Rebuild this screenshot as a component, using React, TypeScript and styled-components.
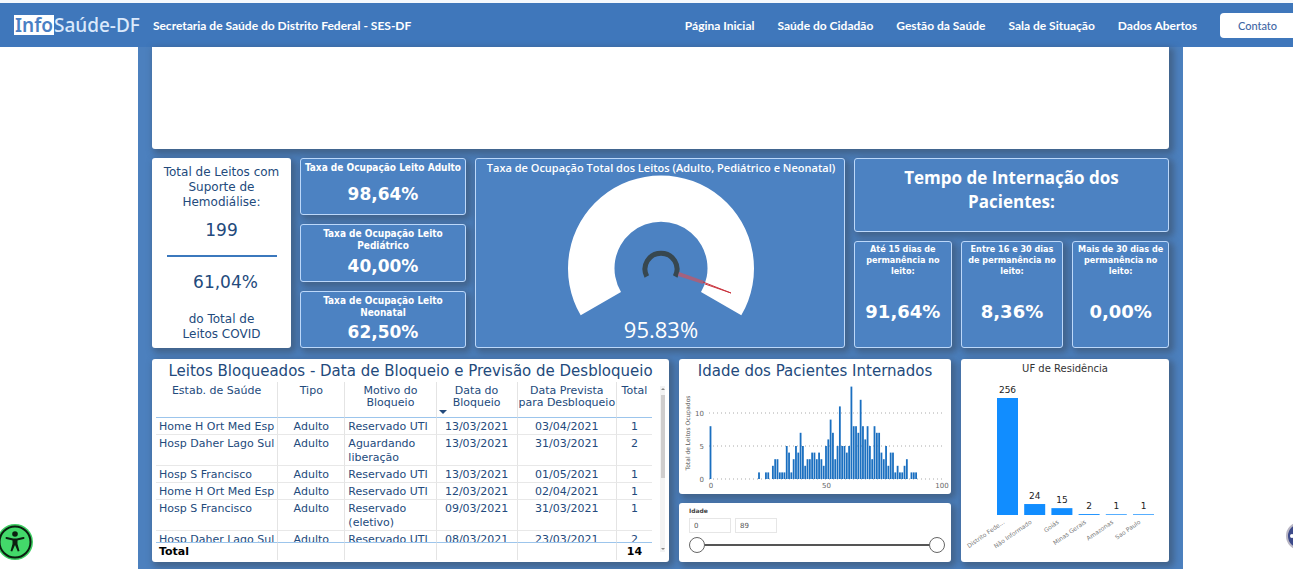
import React from "react";
import styled, { createGlobalStyle } from "styled-components";

const NAVY = "#234a7c";
const VERDANA = '"DejaVu Sans", Verdana, sans-serif';
const TAHOMA = '"DejaVu Sans Condensed", "DejaVu Sans", sans-serif';
const SEGOE = '"Open Sans", "Noto Sans", sans-serif';

const GlobalStyle = createGlobalStyle`
  * { box-sizing: border-box; }
  html { overflow: hidden; }
  body { margin: 0; background: #fff; font-family: ${VERDANA}; }
  h1, h2, h3, p { margin: 0; font-weight: inherit; font-size: inherit; }
`;

const Page = styled.div`
  display: flex;
  flex-direction: column;
  min-height: 100vh;
  overflow-x: clip;
`;

const Header = styled.header`
  display: flex;
  align-items: center;
  height: 47px;
  padding-left: 14px;
  border-top: 3px solid #f4f8fd;
  background: #3f77bb;
  color: #fff;
  font-family: Lato, sans-serif;
  font-size: 12px;
  font-weight: 700;
  white-space: nowrap;
`;

const Logo = styled.a`
  display: flex;
  align-items: center;
  height: 20px;
  color: #dbe9fb;
  font-family: "Noto Sans", sans-serif;
  font-size: 19px;
  font-weight: 500;
  line-height: 20px;
  text-decoration: none;
`;

const LogoMark = styled.span`
  padding: 0 1px;
  background: #fff;
  color: #4a7fc4;
  font-weight: 600;
`;

const Org = styled.h1`
  margin-left: 13px;
`;

const Nav = styled.nav`
  display: flex;
  align-items: center;
  gap: 23px;
  margin-left: auto;
  margin-right: -10px;
`;

const NavLink = styled.a`
  color: #fff;
  text-decoration: none;
`;

const Contact = styled.button`
  width: 83px;
  height: 25px;
  padding: 0 8px 0 0;
  border: 0;
  border-radius: 4px;
  background: #fff;
  color: #3f67a5;
  font: 500 11px Lato, sans-serif;
`;

const Board = styled.main`
  display: flex;
  flex-direction: column;
  flex: 1;
  margin: 0 110px 0 138px;
  padding: 0 14px 7px;
  background: #4c80be;
`;

const shadow = "3px 3px 6px 2px rgba(55, 70, 90, 0.5)";

const Card = styled.section`
  min-width: 0;
  border-radius: 3px;
  background: #fff;
  box-shadow: ${shadow};
  color: ${NAVY};
`;

const Tile = styled.section`
  display: flex;
  flex-direction: column;
  align-items: center;
  min-width: 0;
  border: 1px solid #bcd8fa;
  border-radius: 3px;
  background: #4c82c2;
  box-shadow: ${shadow};
  color: #fff;
  text-align: center;
`;

const BlankCard = styled(Card)`
  height: 102px;
  border-radius: 0 0 3px 3px;
`;

const SummaryRow = styled.div`
  display: grid;
  grid-template-columns: 139fr 166fr 370fr 315fr;
  gap: 9px;
  min-height: 190px;
  margin-top: 9px;
`;

const DetailRow = styled.div`
  display: grid;
  grid-template-columns: 517fr 272fr 208fr;
  gap: 10px;
  min-height: 203px;
  margin-top: 11px;
`;

const Dialysis = styled(Card)`
  display: flex;
  flex-direction: column;
  align-items: center;
  justify-content: space-between;
  padding: 7px 5px 6px;
  font-size: 12px;
  line-height: 15px;
  text-align: center;
`;

const DialysisValue = styled.p`
  font-size: 17px;
  line-height: 20px;
`;

const DialysisTotal = styled(DialysisValue)`
  padding: 0 0 10px 8px;
`;

const Divider = styled.hr`
  width: 110px;
  margin: 5px 0;
  border: 0;
  border-top: 2px solid #3b78bd;
`;

const Stack = styled.div`
  display: flex;
  flex-direction: column;
  gap: 9px;
  min-width: 0;
`;

const RateTile = styled(Tile)`
  flex: 1;
  padding: 3px 2px 1px;
`;

const TileLabel = styled.h2`
  font-family: ${TAHOMA};
  font-size: 10px;
  font-weight: 700;
  line-height: 12px;
`;

const TileValue = styled.p`
  margin: auto 0;
  font-size: 17px;
  font-weight: 700;
  line-height: 22px;
`;

const GaugeTile = styled(Tile)`
  padding: 2px 0 0 2px;
`;

const GaugeTitle = styled.h2`
  font-family: ${SEGOE};
  font-size: 11px;
  font-weight: 600;
  line-height: 14px;
  white-space: nowrap;
`;

const GaugeValue = styled.p`
  font-family: ${SEGOE};
  font-size: 22px;
  line-height: 24px;
`;

const StayTitle = styled(Tile)`
  padding: 7px 40px 17px;
  font-family: ${SEGOE};
  font-size: 17px;
  font-weight: 700;
  line-height: 24px;
`;

const StayGrid = styled.div`
  display: grid;
  grid-template-columns: 98fr 103fr 97fr;
  gap: 9px;
  flex: 1;
`;

const StayTile = styled(Tile)`
  padding: 2px 2px 24px;
  justify-content: space-between;
`;

const StayLabel = styled.h3`
  font-family: ${TAHOMA};
  font-size: 9px;
  font-weight: 700;
  line-height: 11px;
`;

const StayValue = styled.p`
  font-size: 18px;
  font-weight: 700;
  line-height: 22px;
`;

const TableCard = styled(Card)`
  padding: 3px 4px 2px;
`;

const CardTitle = styled.h2`
  font-size: 15px;
  line-height: 18px;
  text-align: center;
  white-space: nowrap;
`;

const TableArea = styled.div`
  display: flex;
  justify-content: space-between;
  margin-top: 2px;
`;

const TableClip = styled.div`
  flex: 1;
  height: 178px;
  overflow: hidden;
`;

const Table = styled.table`
  width: 100%;
  table-layout: fixed;
  border-collapse: separate;
  border-spacing: 0;
  font-size: 11px;
  line-height: 14px;
`;

const Th = styled.th`
  position: relative;
  height: 36px;
  padding: 3px 0 0;
  border-bottom: 1px solid #9cc5ec;
  border-right: 1px solid #e4e4e4;
  font-weight: 400;
  line-height: 12px;
  vertical-align: top;
  &:last-child { border-right: 0; }
`;

const SortMark = styled.span`
  position: absolute;
  left: 2px;
  bottom: 3px;
  border: 4px solid transparent;
  border-top-color: ${NAVY};
  border-bottom: 0;
`;

const Td = styled.td<{ $left?: boolean }>`
  padding: 2px 0 0 ${(p) => (p.$left ? 3 : 0)}px;
  border-bottom: 1px solid #e8e8e8;
  border-right: 1px solid #e4e4e4;
  text-align: ${(p) => (p.$left ? "left" : "center")};
  vertical-align: top;
  &:last-child { border-right: 0; }
`;

const FootTd = styled(Td)`
  position: sticky;
  bottom: 0;
  height: 18px;
  border-top: 1px solid #9cc5ec;
  border-bottom: 0;
  background: #fff;
  color: #000;
  font-weight: 700;
`;

const ScrollBar = styled.div`
  display: flex;
  flex-direction: column;
  align-items: center;
  justify-content: space-between;
  width: 5px;
  margin: 4px 0 8px 8px;
  background: #f3f3f3;
`;

const ScrollThumb = styled.span`
  width: 4px;
  height: 83px;
  margin: 5px 0 auto;
  background: #cfcdcd;
`;

const Arrow = styled.span<{ $down?: boolean }>`
  border: 2px solid transparent;
  border-${(p) => (p.$down ? "top" : "bottom")}-color: #888;
`;

const HistCard = styled(Card)`
  padding: 3px 0 0;
  flex: 1;
`;

const Chart = styled.svg`
  display: block;
  width: 100%;
  height: auto;
  font-family: ${VERDANA};
`;

const AgeCard = styled(Card)`
  padding: 4px 6px 9px 10px;
  color: #444;
`;

const AgeForm = styled.fieldset`
  margin: 0;
  padding: 0;
  border: 0;
`;

const AgeLegend = styled.legend`
  padding: 0;
  font-size: 6px;
  font-weight: 700;
  line-height: 8px;
`;

const AgeInputs = styled.div`
  display: flex;
  gap: 4px;
  margin-top: 3px;
`;

const AgeInput = styled.input`
  width: 42px;
  height: 15px;
  padding: 0 4px;
  border: 1px solid #e6e6e6;
  color: #555;
  font: 7px ${VERDANA};
`;

const RangeTrack = styled.div`
  display: grid;
  align-items: center;
  height: 16px;
  margin-top: 4px;
  background: linear-gradient(#555, #555) center / calc(100% - 30px) 2px no-repeat;
`;

const Range = styled.input`
  grid-area: 1 / 1;
  width: 100%;
  height: 16px;
  margin: 0;
  appearance: none;
  background: transparent;
  pointer-events: none;
  &::-webkit-slider-thumb {
    width: 16px;
    height: 16px;
    appearance: none;
    border: 1px solid #666;
    border-radius: 50%;
    background: #fff;
    pointer-events: auto;
  }
`;

const UfCard = styled(Card)`
  padding-top: 3px;
  color: #333;
`;

const UfTitle = styled.h2`
  font-size: 10px;
  line-height: 13px;
  text-align: center;
`;

const Floating = styled.button<{ $side: "left" | "right" }>`
  position: fixed;
  ${(p) => (p.$side === "left" ? "left: -4px; bottom: 8px;" : "right: -21px; bottom: 19px;")}
  padding: 0;
  border: 0;
  background: none;
  line-height: 0;
`;

const links = ["Página Inicial", "Saúde do Cidadão", "Gestão da Saúde", "Sala de Situação", "Dados Abertos"];

const rates = [
  ["Taxa de Ocupação Leito Adulto", "98,64%"],
  ["Taxa de Ocupação Leito Pediátrico", "40,00%"],
  ["Taxa de Ocupação Leito Neonatal", "62,50%"],
];

const stays = [
  ["Até 15 dias de permanência no leito:", "91,64%"],
  ["Entre 16 e 30 dias de permanência no leito:", "8,36%"],
  ["Mais de 30 dias de permanência no leito:", "0,00%"],
];

const columns = [
  ["Estab. de Saúde", 122],
  ["Tipo", 67],
  ["Motivo do Bloqueio", 91],
  ["Data do Bloqueio", 81],
  ["Data Prevista para Desbloqueio", 99],
  ["Total", 35],
] as const;

const rows = [
  ["Home H Ort Med Esp", "Adulto", "Reservado UTI", "13/03/2021", "03/04/2021", "1"],
  ["Hosp Daher Lago Sul", "Adulto", "Aguardando liberação", "13/03/2021", "31/03/2021", "2"],
  ["Hosp S Francisco", "Adulto", "Reservado UTI", "13/03/2021", "01/05/2021", "1"],
  ["Home H Ort Med Esp", "Adulto", "Reservado UTI", "12/03/2021", "02/04/2021", "1"],
  ["Hosp S Francisco", "Adulto", "Reservado (eletivo)", "09/03/2021", "31/03/2021", "1"],
  ["Hosp Daher Lago Sul", "Adulto", "Reservado UTI", "08/03/2021", "23/03/2021", "2"],
];

// Patients per year of age, starting at age 21.
const ages = [
  1, 0, 0, 1, 1, 0, 2, 3, 3, 1, 1, 1, 5, 4, 1, 3, 5, 4, 7, 5, 2, 3, 3, 4, 4, 3, 4, 3, 2, 5, 6, 9, 7, 3, 5, 11, 5, 5,
  4, 5, 14, 8, 8, 7, 12, 8, 6, 8, 5, 3, 8, 7, 7, 4, 3, 5, 2, 4, 4, 1, 2, 1, 1, 2, 3, 0, 1, 1, 1,
];
const histogram = [{ age: 0, n: 8 }, ...ages.map((n, i) => ({ age: i + 21, n }))];

const states = [
  ["Distrito Fede...", 256],
  ["Não Informado", 24],
  ["Goiás", 15],
  ["Minas Gerais", 2],
  ["Amazonas", 1],
  ["Sao Paulo", 1],
] as const;

function Gauge() {
  return (
    <svg width="190" height="142" viewBox="0 0 190 142" role="img" aria-label="Medidor 95.83%">
      <path d="M14.7 140.3A93 93 0 1 1 175.3 140.3L135 117A46.500 46.500 0 1 0 55 117Z" fill="#fff" />
      <path d="M80.800 101.500A16 16 0 1 1 109.200 101.500" fill="none" stroke="#37474f" strokeWidth="5" />
      <path d="M113 97L138 106L137 109L112 101Z" fill="#a3627f" />
      <path d="M137 107L165 118L139 109" fill="none" stroke="#c9323c" strokeWidth="1" />
    </svg>
  );
}

function AgeHistogram() {
  return (
    <Chart viewBox="0 0 272 112" role="img" aria-label="Idade dos Pacientes Internados">
      {[0, 5, 10].map((v) => (
        <g key={v}>
          <line x1="30" x2="263" y1={99 - v * 6.6} y2={99 - v * 6.6} stroke="#aaa" strokeDasharray="1 3" />
          <text x="25" y={102 - v * 6.6} fontSize="7" fill="#666" textAnchor="end">{v}</text>
        </g>
      ))}
      {histogram.map(({ age, n }) => (
        <rect key={age} x={30.600 + age * 2.31} y={99 - n * 6.6} width="1.800" height={n * 6.6} fill="#1a6fc0" />
      ))}
      {[0, 50, 100].map((v) => (
        <text key={v} x={32 + v * 2.31} y="108" fontSize="7" fill="#666" textAnchor="middle">{v}</text>
      ))}
      <text transform="translate(11 53) rotate(-90)" fontSize="6" fill="#555" textAnchor="middle">
        Total de Leitos Ocupados
      </text>
    </Chart>
  );
}

function StatesChart() {
  return (
    <Chart viewBox="0 0 208 185" role="img" aria-label="UF de Residência">
      {states.map(([name, n], i) => {
        const h = Math.max(n * 0.457, 0.7);
        const x = 36 + i * 27.2;
        return (
          <g key={name}>
            <rect x={x} y={140 - h} width="21" height={h} fill="#118dff" />
            <text x={x + 10.500} y={135 - h} fontSize="9" fill="#222" textAnchor="middle">{n}</text>
            <text transform={`translate(${x + 8} 148) rotate(-35)`} fontSize="6" fill="#777" textAnchor="end">
              {name}
            </text>
          </g>
        );
      })}
    </Chart>
  );
}

export default function App() {
  return (
    <Page>
      <GlobalStyle />
      <Header>
        <Logo href="#"><LogoMark>Info</LogoMark>Saúde-DF</Logo>
        <Org>Secretaria de Saúde do Distrito Federal - SES-DF</Org>
        <Nav>
          {links.map((l) => <NavLink key={l} href="#">{l}</NavLink>)}
          <Contact type="button">Contato</Contact>
        </Nav>
      </Header>
      <Board>
        <BlankCard />
        <SummaryRow>
          <Dialysis>
            <h2>Total de Leitos com Suporte de Hemodiálise:</h2>
            <DialysisValue>199</DialysisValue>
            <Divider />
            <DialysisTotal>61,04%</DialysisTotal>
            <p>do Total de<br />Leitos COVID</p>
          </Dialysis>
          <Stack>
            {rates.map(([label, value]) => (
              <RateTile key={label}>
                <TileLabel>{label}</TileLabel>
                <TileValue>{value}</TileValue>
              </RateTile>
            ))}
          </Stack>
          <GaugeTile>
            <GaugeTitle>Taxa de Ocupação Total dos Leitos (Adulto, Pediátrico e Neonatal)</GaugeTitle>
            <Gauge />
            <GaugeValue>95.83%</GaugeValue>
          </GaugeTile>
          <Stack>
            <StayTitle as="h2">Tempo de Internação dos Pacientes:</StayTitle>
            <StayGrid>
              {stays.map(([label, value]) => (
                <StayTile key={label}>
                  <StayLabel>{label}</StayLabel>
                  <StayValue>{value}</StayValue>
                </StayTile>
              ))}
            </StayGrid>
          </Stack>
        </SummaryRow>
        <DetailRow>
          <TableCard>
            <CardTitle>Leitos Bloqueados - Data de Bloqueio e Previsão de Desbloqueio</CardTitle>
            <TableArea>
              <TableClip>
                <Table>
                  <colgroup>
                    {columns.map(([name, w]) => <col key={name} style={{ width: `${(w / 495) * 100}%` }} />)}
                  </colgroup>
                  <thead>
                    <tr>
                      {columns.map(([name]) => (
                        <Th key={name} scope="col">
                          {name}
                          {name === "Data do Bloqueio" && <SortMark />}
                        </Th>
                      ))}
                    </tr>
                  </thead>
                  <tbody>
                    {rows.map((row, r) => (
                      <tr key={r}>
                        {row.map((cell, c) => <Td key={c} $left={c === 0 || c === 2}>{cell}</Td>)}
                      </tr>
                    ))}
                  </tbody>
                  <tfoot>
                    <tr>
                      <FootTd $left>Total</FootTd>
                      <FootTd /><FootTd /><FootTd /><FootTd />
                      <FootTd>14</FootTd>
                    </tr>
                  </tfoot>
                </Table>
              </TableClip>
              <ScrollBar aria-hidden="true">
                <Arrow />
                <ScrollThumb />
                <Arrow $down />
              </ScrollBar>
            </TableArea>
          </TableCard>
          <Stack>
            <HistCard>
              <CardTitle>Idade dos Pacientes Internados</CardTitle>
              <AgeHistogram />
            </HistCard>
            <AgeCard>
              <AgeForm>
                <AgeLegend>Idade</AgeLegend>
                <AgeInputs>
                  <AgeInput aria-label="Idade mínima" defaultValue="0" />
                  <AgeInput aria-label="Idade máxima" defaultValue="89" />
                </AgeInputs>
                <RangeTrack>
                  <Range type="range" aria-label="Mínimo" min="0" max="89" defaultValue="0" />
                  <Range type="range" aria-label="Máximo" min="0" max="89" defaultValue="89" />
                </RangeTrack>
              </AgeForm>
            </AgeCard>
          </Stack>
          <UfCard>
            <UfTitle>UF de Residência</UfTitle>
            <StatesChart />
          </UfCard>
        </DetailRow>
      </Board>
      <Floating $side="left" type="button" aria-label="Acessibilidade">
        <svg width="38" height="38" viewBox="0 0 38 38">
          <circle cx="19" cy="19" r="18" fill="#3ecf63" />
          <circle cx="19" cy="19" r="15.500" fill="#43d96a" stroke="#0b1f10" strokeWidth="2" />
          <circle cx="19" cy="11" r="2.800" fill="#0b1f10" />
          <path d="M10.500 15L17 16.500H21L27.500 15" fill="none" stroke="#0b1f10" strokeWidth="2" strokeLinecap="round" />
          <path d="M16.500 16H21.500V21L23.500 28L21.800 28.500L19 22L16.200 28.500L14.500 28L16.500 21Z" fill="#0b1f10" />
        </svg>
      </Floating>
      <Floating $side="right" type="button" aria-label="Assistente">
        <svg width="28" height="28" viewBox="0 0 28 28">
          <circle cx="14" cy="14" r="13" fill="#3d4a8a" stroke="#b9b6c4" strokeWidth="2" />
          <circle cx="6" cy="14" r="2" fill="#fff" />
        </svg>
      </Floating>
    </Page>
  );
}
